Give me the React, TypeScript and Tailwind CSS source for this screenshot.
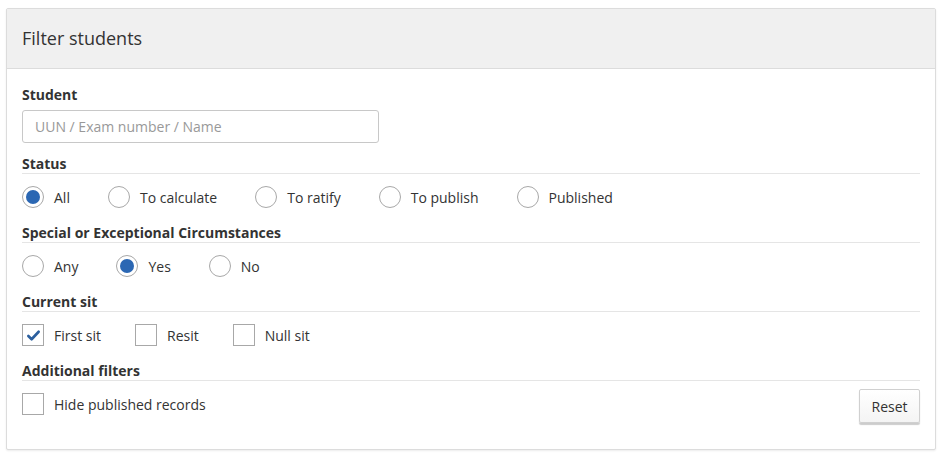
import { useState } from 'react';

const font = { fontFamily: '"Open Sans", "Liberation Sans", sans-serif' };

interface OptionProps {
	label: string;
	checked: boolean;
	onClick: () => void;
}

const Radio = ({ label, checked, onClick }: OptionProps) => (
	<label className="flex items-center mr-[38px] cursor-pointer" onClick={onClick}>
		<span className="flex items-center justify-center w-[22px] h-[22px] rounded-full border border-[#a8a8a8] bg-white shrink-0">
			{checked ? <span className="w-[14px] h-[14px] rounded-full bg-[#2b67b3]" /> : null}
		</span>
		<span className="ml-[10px] text-[14px] text-[#333]">{label}</span>
	</label>
);

const Checkbox = ({ label, checked, onClick }: OptionProps) => (
	<label className="flex items-center mr-[34px] cursor-pointer" onClick={onClick}>
		<span className="flex items-center justify-center w-[22px] h-[22px] border border-[#a8a8a8] bg-white shrink-0">
			{checked ? (
				<svg viewBox="0 0 16 16" className="w-[15px] h-[15px]">
					<path d="M2.5 8.5 L6 12 L13.5 4" fill="none" stroke="#2b5f9e" strokeWidth="2.8" strokeLinecap="round" strokeLinejoin="round" />
				</svg>
			) : null}
		</span>
		<span className="ml-[10px] text-[14px] text-[#333]">{label}</span>
	</label>
);

const Heading = ({ children, first }: { children: React.ReactNode; first?: boolean }) => (
	<div
		className={
			first
				? 'text-[14px] font-bold text-[#333] leading-[19px] border-b border-[#e5e5e5] mt-[11px]'
				: 'text-[14px] font-bold text-[#333] leading-[19px] border-b border-[#e5e5e5] mt-[15px]'
		}
	>
		{children}
	</div>
);

export default function App() {
	const [status, setStatus] = useState('All');
	const [sec, setSec] = useState('Yes');
	const [sits, setSits] = useState<Record<string, boolean>>({ 'First sit': true, Resit: false, 'Null sit': false });
	const [hide, setHide] = useState(false);

	return (
		<div className="bg-white w-[942px] h-[459px] pt-[8px] px-[6px]" style={font}>
			<div className="border border-[#dcdcdc] rounded-[2px] bg-white shadow-[0_1px_2px_rgba(0,0,0,0.08)]">
				<div className="bg-[#f0f0f0] border-b border-[#dcdcdc] h-[60px] px-[15px] flex items-center">
					<h2 className="text-[18px] text-[#333] font-normal">Filter students</h2>
				</div>
				<div className="px-[15px] pt-[16px] pb-[26px]">
					<div className="text-[14px] font-bold text-[#333] leading-[20px]">Student</div>
					<input
						className="mt-[5px] w-[357px] h-[33px] border border-[#c8c8c8] rounded-[3px] px-[12px] text-[14px] text-[#333] placeholder:text-[#999] outline-none"
						placeholder="UUN / Exam number / Name"
					/>
					<Heading first>Status</Heading>
					<div className="flex mt-[12px]">
						{['All', 'To calculate', 'To ratify', 'To publish', 'Published'].map((s) => (
							<Radio key={s} label={s} checked={status === s} onClick={() => setStatus(s)} />
						))}
					</div>
					<Heading>Special or Exceptional Circumstances</Heading>
					<div className="flex mt-[12px]">
						{['Any', 'Yes', 'No'].map((s) => (
							<Radio key={s} label={s} checked={sec === s} onClick={() => setSec(s)} />
						))}
					</div>
					<Heading>Current sit</Heading>
					<div className="flex mt-[12px]">
						{Object.keys(sits).map((s) => (
							<Checkbox key={s} label={s} checked={sits[s]} onClick={() => setSits({ ...sits, [s]: !sits[s] })} />
						))}
					</div>
					<Heading>Additional filters</Heading>
					<div className="flex justify-between items-start mt-[8px]">
						<div className="mt-[4px]">
							<Checkbox label="Hide published records" checked={hide} onClick={() => setHide(!hide)} />
						</div>
						<button className="w-[61px] h-[34px] border border-[#d0d0d0] rounded-[2px] bg-gradient-to-b from-white to-[#f4f4f4] text-[14px] text-[#333] shadow-[0_2px_1px_rgba(0,0,0,0.2)]">
							Reset
						</button>
					</div>
				</div>
			</div>
		</div>
	);
}
